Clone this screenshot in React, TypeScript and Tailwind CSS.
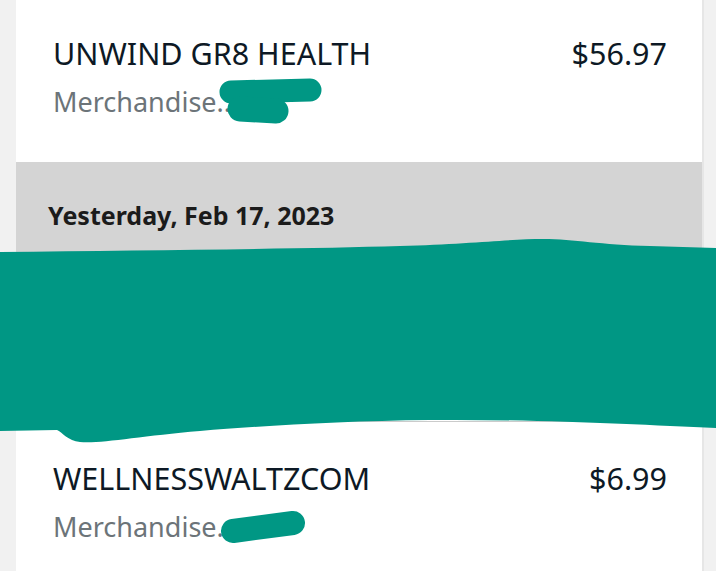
import React from "react";

const font = { fontFamily: '"Noto Sans", "Open Sans", sans-serif' };

type Txn = { name: string; category: string; amount: string };

const TxnRow: React.FC<{ txn: Txn; className?: string }> = ({ txn, className }) => (
	<div className={"pl-[37px] pr-[35px] " + (className ?? "")}>
		<div className="flex items-start justify-between">
			<span className="text-[30.5px] leading-[40px] text-[#0d1925]">{txn.name}</span>
			<span className="text-[30.5px] leading-[40px] text-[#0d1925]">{txn.amount}</span>
		</div>
		<div className="mt-[11px] text-[27px] leading-[36px] text-[#6c7479]">{txn.category}</div>
	</div>
);

export default function App() {
	return (
		<div className="relative h-[571px] w-[716px] overflow-hidden bg-[#f1f1f1]" style={font}>
			<div className="ml-[16px] mr-[12px] h-full border-r-2 border-[#e6e6e6] bg-white">
				<TxnRow
					className="pt-[33px] pb-[42px]"
					txn={{ name: "UNWIND GR8 HEALTH", category: "Merchandise..", amount: "$56.97" }}
				/>
				<div className="h-[100px] bg-[#d4d4d4] px-[32px] pt-[37px]">
					<h3 className="text-[25px] font-bold leading-[32px] text-[#1b1b1b]">Yesterday, Feb 17, 2023</h3>
				</div>
				<div className="h-[159px]" />
				<TxnRow
					className="border-t border-[#cbcbcb] pt-[36px]"
					txn={{ name: "WELLNESSWALTZCOM", category: "Merchandise.", amount: "$6.99" }}
				/>
			</div>

			{/* redaction marks */}
			<svg className="absolute left-0 top-0" width="716" height="571" viewBox="0 0 716 571">
				<path
					fill="#009784"
					d="M0 252 C150 250 300 249 400 246 C470 244 510 239 543 239 C575 239 600 245 650 246 L716 248 L716 428 C640 425 540 419 430 420 C340 421 260 426 200 431 C140 436 100 444 80 442 C68 441 62 432 57 430 L0 431 Z"
				/>
				<g stroke="#009784" strokeLinecap="round" fill="none">
					<path d="M231 92 L310 90" strokeWidth="23" />
					<path d="M240 109 L276 111" strokeWidth="25" />
					<path d="M233 531 L293 523" strokeWidth="24" />
				</g>
			</svg>
		</div>
	);
}
